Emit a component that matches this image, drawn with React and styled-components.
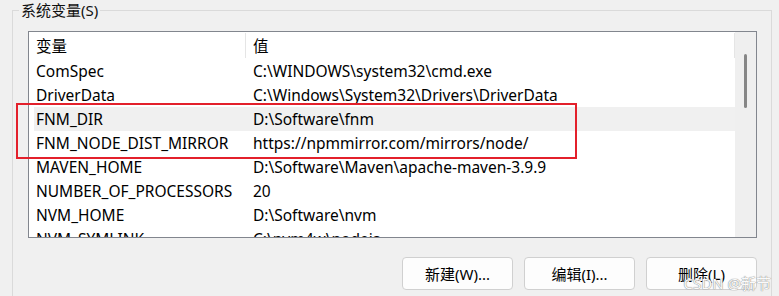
import React from 'react';
import styled, { createGlobalStyle } from 'styled-components';

const GlobalStyle = createGlobalStyle`
  html, body {
    margin: 0;
    padding: 0;
    background: #f0f0f0;
    overflow: hidden;
  }
  body {
    font-family: "Noto Sans", "Noto Sans CJK SC", sans-serif;
    color: #000;
  }
`;

const Page = styled.div`
  position: relative;
  width: 779px;
  height: 296px;
  overflow: hidden;
`;

const GroupBox = styled.fieldset`
  margin: 0 0 0 12px;
  width: 760px;
  height: 330px;
  box-sizing: border-box;
  padding: 0 15px;
  border: 1px solid #dadada;
  min-width: 0;
`;

const Legend = styled.legend`
  margin-left: -9px;
  padding: 0 2px;
  font-size: 15px;
  line-height: 20px;
  color: #111;
`;

const ListBox = styled.div`
  margin-top: 11px;
  width: 729px;
  height: 207px;
  box-sizing: border-box;
  border: 1px solid #82868e;
  background: #fff;
  display: flex;
  overflow: hidden;
`;

const ListBody = styled.div`
  flex: 1;
  display: flex;
  flex-direction: column;
  overflow: hidden;
`;

const Header = styled.div`
  height: 27px;
  flex: none;
  display: grid;
  grid-template-columns: 217px 1fr;
  font-size: 15.5px;
`;

const HeaderCell = styled.div`
  padding-left: 7px;
  display: flex;
  align-items: center;
  border-right: 1px solid #e5e5e5;
  margin: 1px 0;
`;

const Row = styled.div`
  height: 24px;
  flex: none;
  display: grid;
  grid-template-columns: 217px 1fr;
  align-items: center;
  font-size: 15.5px;
  margin-left: 5px;
  padding-left: 2px;
  background: ${(p) => (p.$selected ? '#f0f0f0' : 'transparent')};
  white-space: nowrap;
`;

const Cell = styled.div`
  overflow: hidden;
`;

const ScrollTrack = styled.div`
  width: 21px;
  flex: none;
  background: #efefef;
  display: flex;
  justify-content: center;
  padding-top: 22px;
  box-sizing: border-box;
`;

const ScrollThumb = styled.div`
  width: 3px;
  height: 54px;
  border-radius: 2px;
  background: #868686;
`;

const ButtonBar = styled.div`
  display: flex;
  justify-content: flex-end;
  gap: 11px;
  width: 729px;
  margin-top: 19px;
`;

const Button = styled.button`
  width: 111px;
  height: 33px;
  box-sizing: border-box;
  border: 1px solid #d0d0d0;
  border-radius: 4px;
  background: #fdfdfd;
  font-family: "Noto Sans", "Noto Sans CJK SC", sans-serif;
  font-size: 15px;
  color: #000;
  padding: 0;
`;

const Highlight = styled.div`
  position: absolute;
  left: 16px;
  top: 103px;
  width: 561px;
  height: 56px;
  border: 2px solid #e3202b;
  box-sizing: border-box;
  pointer-events: none;
`;

const Watermark = styled.div`
  position: absolute;
  right: 8px;
  bottom: 3px;
  font-size: 15px;
  color: #fafafa;
  text-shadow: 0 0 1px #7d7d7d, 0 0 1px #9a9a9a;
  pointer-events: none;
`;

const vars = [
  ['ComSpec', 'C:\\WINDOWS\\system32\\cmd.exe'],
  ['DriverData', 'C:\\Windows\\System32\\Drivers\\DriverData'],
  ['FNM_DIR', 'D:\\Software\\fnm', true],
  ['FNM_NODE_DIST_MIRROR', 'https://npmmirror.com/mirrors/node/'],
  ['MAVEN_HOME', 'D:\\Software\\Maven\\apache-maven-3.9.9'],
  ['NUMBER_OF_PROCESSORS', '20'],
  ['NVM_HOME', 'D:\\Software\\nvm'],
  ['NVM_SYMLINK', 'C:\\nvm4w\\nodejs'],
];

export default function App() {
  return (
    <Page>
      <GlobalStyle />
      <GroupBox>
        <Legend>系统变量(S)</Legend>
        <ListBox>
          <ListBody>
            <Header>
              <HeaderCell>变量</HeaderCell>
              <HeaderCell>值</HeaderCell>
            </Header>
            {vars.map(([name, value, sel]) => (
              <Row key={name} $selected={sel}>
                <Cell>{name}</Cell>
                <Cell>{value}</Cell>
              </Row>
            ))}
          </ListBody>
          <ScrollTrack>
            <ScrollThumb />
          </ScrollTrack>
        </ListBox>
        <ButtonBar>
          <Button>新建(W)...</Button>
          <Button>编辑(I)...</Button>
          <Button>删除(L)</Button>
        </ButtonBar>
      </GroupBox>
      <Highlight />
      <Watermark>CSDN @新节</Watermark>
    </Page>
  );
}
